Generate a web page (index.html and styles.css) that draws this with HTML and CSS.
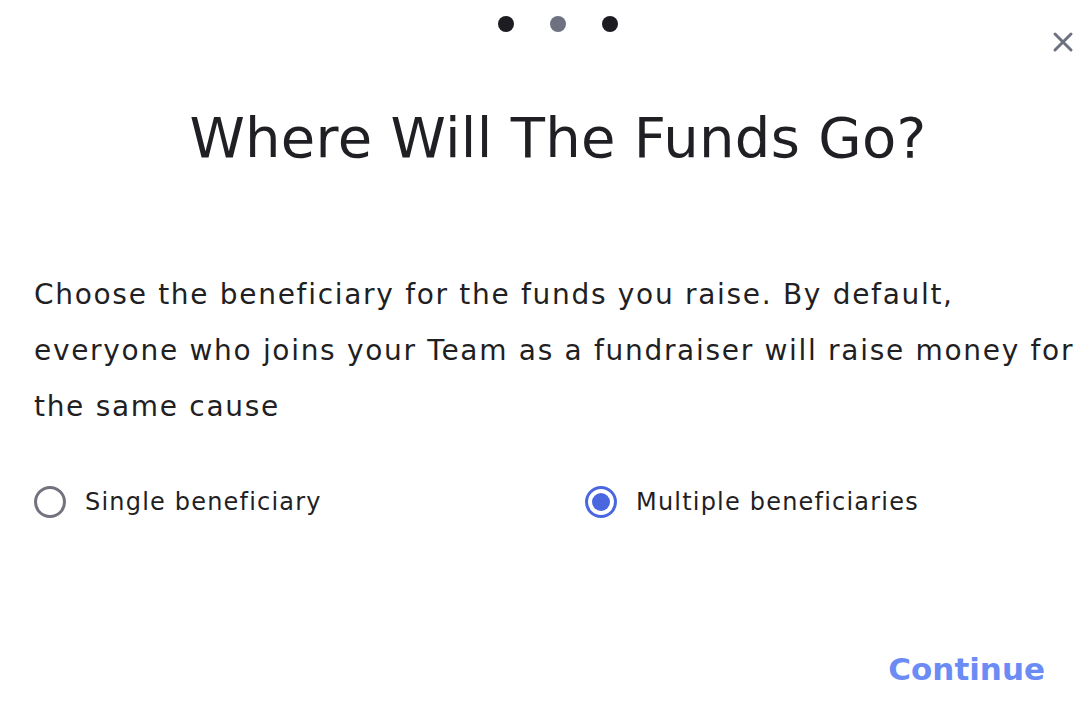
FILE: index.html
```html
<!DOCTYPE html>
<html lang="en">
<head>
    <meta charset="UTF-8">
    <meta name="viewport" content="width=device-width, initial-scale=1.0">
    <title>Where Will The Funds Go?</title>
    <link rel="stylesheet" href="styles.css">
</head>
<body>
    <div class="modal">
        <div class="steps">
            <span class="dot"></span>
            <span class="dot current"></span>
            <span class="dot"></span>
        </div>
        <button class="close" aria-label="Close">
            <svg width="22" height="22" viewBox="0 0 22 22"><path d="M3 3L19 19M19 3L3 19" stroke="#6e7180" stroke-width="3" stroke-linecap="round"/></svg>
        </button>
        <h1>Where Will The Funds Go?</h1>
        <p class="intro">Choose the beneficiary for the funds you raise. By default, everyone who joins your Team as a fundraiser will raise money for the same cause</p>
        <div class="options">
            <label class="option">
                <input type="radio" name="beneficiary" value="single">
                <span class="radio"></span>
                Single beneficiary
            </label>
            <label class="option">
                <input type="radio" name="beneficiary" value="multiple" checked>
                <span class="radio"></span>
                Multiple beneficiaries
            </label>
        </div>
        <div class="footer">
            <button class="continue">Continue</button>
        </div>
    </div>
</body>
</html>
```

FILE: styles.css
```css
html, body {
    margin: 0;
    background: #fff;
    overflow: hidden;
}
body {
    font-family: "DejaVu Sans", "Open Sans", sans-serif;
    color: #1f1f24;
}
.modal {
    position: relative;
    width: 1116px;
    height: 714px;
    box-sizing: border-box;
    padding: 16px 34px 0 34px;
}
.steps {
    display: flex;
    justify-content: center;
    gap: 36px;
}
.dot {
    width: 16px;
    height: 16px;
    border-radius: 50%;
    background: #1c1c22;
}
.dot.current {
    background: #6e7180;
}
.close {
    position: absolute;
    top: 31px;
    left: 1052px;
    border: none;
    background: none;
    padding: 0;
    cursor: pointer;
}
.close svg {
    display: block;
}
h1 {
    margin: 70px 0 0;
    text-align: center;
    font-size: 56px;
    font-weight: 400;
    line-height: 1.3;
    letter-spacing: 0.3px;
}
.intro {
    margin: 92px 0 0;
    font-size: 28px;
    line-height: 56px;
    letter-spacing: 1.7px;
    max-width: 1050px;
}
.options {
    display: grid;
    grid-template-columns: 551px 1fr;
    margin-top: 51px;
}
.option {
    display: flex;
    align-items: center;
    gap: 19px;
    font-size: 24px;
    letter-spacing: 1.2px;
    cursor: pointer;
}
.option input {
    display: none;
}
.radio {
    width: 26px;
    height: 26px;
    border: 3px solid #737380;
    border-radius: 50%;
    box-sizing: content-box;
    position: relative;
}
.option input:checked + .radio {
    border-color: #4a67e0;
}
.option input:checked + .radio::after {
    content: "";
    position: absolute;
    top: 4px;
    left: 4px;
    width: 18px;
    height: 18px;
    border-radius: 50%;
    background: #4a67e0;
}
.footer {
    display: flex;
    justify-content: flex-end;
    margin-top: 133px;
    padding-right: 37px;
}
.continue {
    border: none;
    background: none;
    padding: 0;
    font-family: inherit;
    font-size: 31px;
    font-weight: 600;
    color: #6b8cf5;
    cursor: pointer;
}
```
